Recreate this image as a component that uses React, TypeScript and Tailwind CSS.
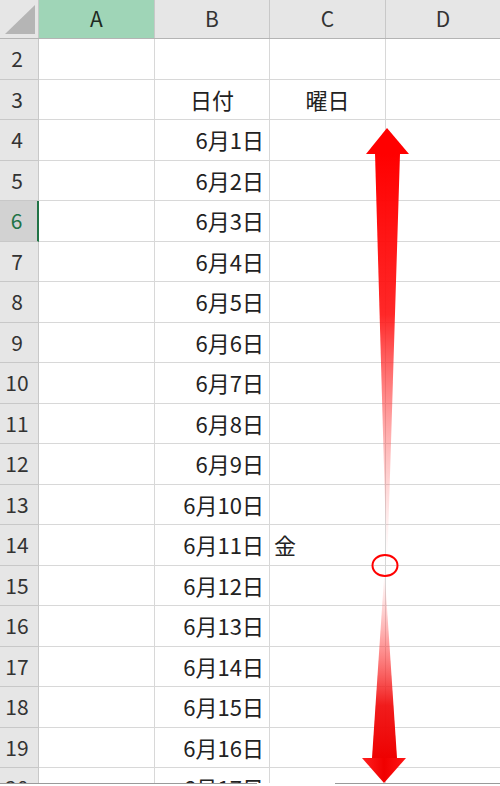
import React from "react";

const rows = Array.from({ length: 19 }, (_, i) => i + 2);

function cellB(r: number) {
  if (r === 3) return "日付";
  if (r >= 4) return `6月${r - 3}日`;
  return "";
}

export default function App() {
  return (
    <div className="relative w-[500px] h-[786px] overflow-hidden bg-white font-['Noto_Sans_CJK_JP',sans-serif] text-[#222]">
      <div className="flex flex-col h-full">
        {/* header row */}
        <div className="grid grid-cols-[39px_116px_115px_116px_114px] h-[39px] shrink-0 bg-[#e6e6e6] border-b border-[#b4b4b4]">
          <div className="flex items-end justify-end pr-[3px] pb-[4px] border-r border-[#c8c8c8]">
            <svg width="30" height="29" viewBox="0 0 30 29">
              <polygon points="0,29 30,29 30,0" fill="#b5b5b5" />
            </svg>
          </div>
          <div className="flex items-center justify-center bg-[#9fd5b7] border-r border-[#c8c8c8] text-[21px] text-[#1e2a22]">A</div>
          <div className="flex items-center justify-center border-r border-[#c8c8c8] text-[21px] text-[#333]">B</div>
          <div className="flex items-center justify-center border-r border-[#c8c8c8] text-[21px] text-[#333]">C</div>
          <div className="flex items-center justify-center text-[21px] text-[#333]">D</div>
        </div>
        {/* body */}
        <div className="flex-1 overflow-hidden">
          {rows.map((r) => (
            <div key={r} className="grid grid-cols-[39px_116px_115px_116px_114px] h-[40.5px]">
              <div
                className={
                  r === 6
                    ? "flex items-center justify-center pr-[4px] bg-[#d2d2d2] border-b border-[#c8c8c8] border-r-2 border-r-[#217346] text-[21px] text-[#217346]"
                    : "flex items-center justify-center pr-[4px] bg-[#e6e6e6] border-b border-[#c8c8c8] border-r border-r-[#c8c8c8] text-[21px] text-[#333]"
                }
              >
                {r}
              </div>
              <div className="border-r border-b border-[#d8d8d8]" />
              <div
                className={
                  r === 3
                    ? "flex items-center justify-center border-r border-b border-[#d8d8d8] text-[22px] whitespace-nowrap"
                    : "flex items-center justify-end pr-[5px] border-r border-b border-[#d8d8d8] text-[22px] whitespace-nowrap"
                }
              >
                {cellB(r)}
              </div>
              <div
                className={
                  r === 3
                    ? "flex items-center justify-center border-r border-b border-[#d8d8d8] text-[22px] whitespace-nowrap"
                    : "flex items-center justify-start pl-[4px] border-r border-b border-[#d8d8d8] text-[22px] whitespace-nowrap"
                }
              >
                {r === 3 ? "曜日" : r === 14 ? "金" : ""}
              </div>
              <div className="border-b border-[#d8d8d8]" />
            </div>
          ))}
        </div>
        {/* bottom bar */}
        <div className="flex h-[3px] shrink-0 bg-white">
          <div className="w-[257px] border-t border-[#9a9a9a]" />
          <div className="w-[78px]" />
          <div className="flex-1 border-t border-[#9a9a9a]" />
        </div>
      </div>

      {/* overlay arrows */}
      <svg
        className="absolute inset-0 pointer-events-none"
        width="500"
        height="786"
        viewBox="0 0 500 786"
      >
        <defs>
          <linearGradient id="upg" gradientUnits="userSpaceOnUse" x1="0" y1="154" x2="0" y2="555">
            <stop offset="0" stopColor="#ff0000" stopOpacity="1" />
            <stop offset="0.4" stopColor="#ff1010" stopOpacity="0.9" />
            <stop offset="0.75" stopColor="#ff4a4a" stopOpacity="0.35" />
            <stop offset="1" stopColor="#ff7070" stopOpacity="0" />
          </linearGradient>
          <linearGradient id="dng" gradientUnits="userSpaceOnUse" x1="0" y1="578" x2="0" y2="760">
            <stop offset="0" stopColor="#ff7070" stopOpacity="0.05" />
            <stop offset="0.35" stopColor="#ff4040" stopOpacity="0.5" />
            <stop offset="0.7" stopColor="#f01010" stopOpacity="0.95" />
            <stop offset="1" stopColor="#ee0000" stopOpacity="1" />
          </linearGradient>
          <linearGradient id="dnh" gradientUnits="userSpaceOnUse" x1="362" y1="0" x2="406" y2="0">
            <stop offset="0" stopColor="#ff2020" />
            <stop offset="0.5" stopColor="#f00000" />
            <stop offset="1" stopColor="#ff1515" />
          </linearGradient>
        </defs>
        {/* up arrow */}
        <polygon points="375,153 400,153 387.5,555 386.5,555" fill="url(#upg)" />
        <polygon points="387,128 409,154 366,154" fill="#ff0000" />
        {/* down arrow */}
        <polygon points="384,578 385,578 397,758 372,758" fill="url(#dng)" />
        <polygon points="362,758 406,758 384,783" fill="url(#dnh)" />
        {/* circle */}
        <ellipse cx="385" cy="565.5" rx="12.5" ry="10.5" fill="none" stroke="#ff0000" strokeWidth="2" />
      </svg>
    </div>
  );
}
